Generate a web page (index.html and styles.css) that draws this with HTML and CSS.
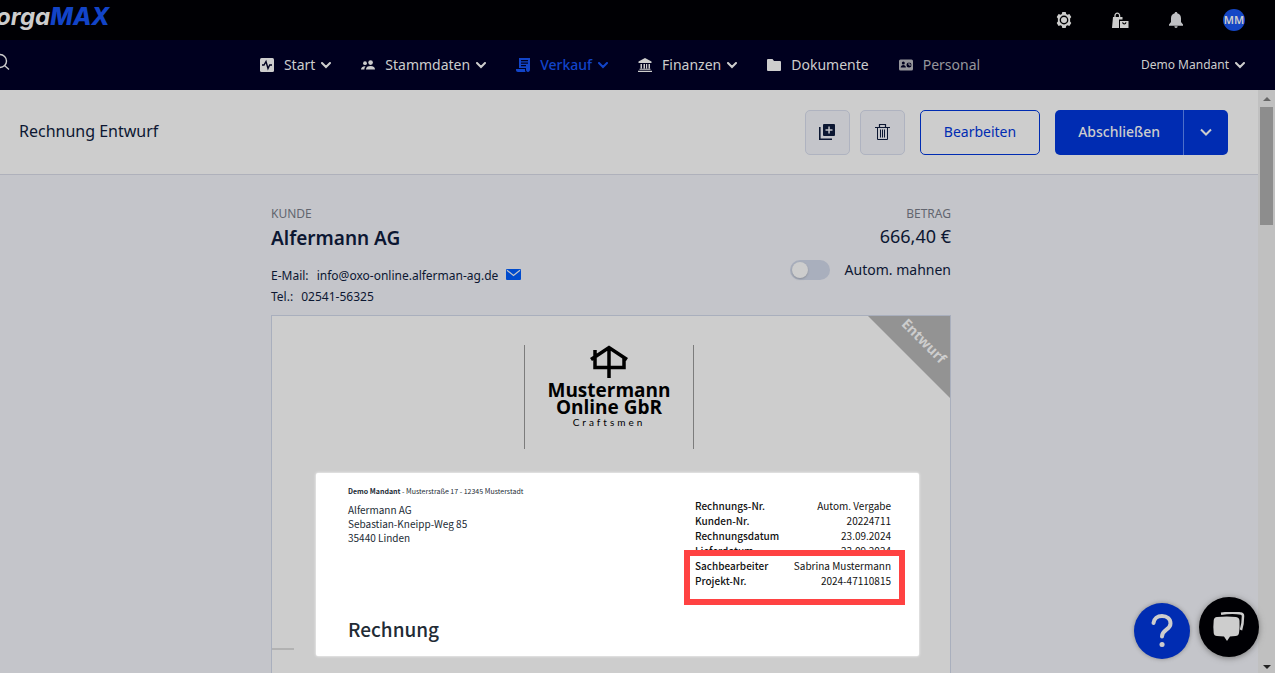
FILE: index.html
```html
<!DOCTYPE html>
<html lang="de">
<head>
<meta charset="utf-8">
<title>Rechnung Entwurf</title>
<link rel="stylesheet" href="styles.css">
</head>
<body>
<svg class="defs" aria-hidden="true">
  <symbol id="chev" viewBox="0 0 10 7"><path d="M1 1l4 4 4-4" fill="none" stroke="currentColor" stroke-width="2" stroke-linecap="round"/></symbol>
</svg>

<header class="topbar">
  <a class="brand" href="#">orga<span>MAX</span></a>
  <div class="tools">
    <button aria-label="Einstellungen"><svg width="16" height="16" viewBox="0 0 16 16"><path fill="currentColor" fill-rule="evenodd" d="M6.300 0h3.400l.5 2.100 1.100.7 2.100-.7 1.900 3-1.200 1.400v3l1.200 1.400-1.900 3-2.100-.7-1.100.7-.5 2.100H6.300l-.5-2.100-1.100-.7-2.100.7-1.900-3 1.200-1.400v-3L.7 5.100l1.900-3 2.100.7 1.100-.7zM8 3.600a4.400 4.400 0 1 0 0 8.800 4.400 4.400 0 0 0 0-8.800zM8 5a3 3 0 1 1 0 6 3 3 0 0 1 0-6z"/></svg></button>
    <button aria-label="Shop"><svg width="17" height="16" viewBox="0 0 17 16"><path d="M3 6V3.500a2.300 2.300 0 0 1 4.600 0V6" fill="none" stroke="currentColor" stroke-width="1.300"/><path fill="currentColor" d="M1 5h9.500v2.500H7V16H0z"/><path fill="currentColor" fill-rule="evenodd" d="M8 9h8.500v7H8zm2.200 1.300c.2 3 4 3 4.200 0h-1c-.2 1.500-2 1.500-2.200 0z"/></svg></button>
    <button aria-label="Benachrichtigungen" class="bell"><svg width="14" height="16" viewBox="0 0 14 16"><path fill="currentColor" d="M7 0c.8 0 1.300.5 1.300 1.200C10.700 1.800 12 3.700 12 6.300V10l2 2.500v1.200H0v-1.200L2 10V6.300C2 3.700 3.300 1.800 5.700 1.200 5.700.5 6.200 0 7 0zM5.400 14.300h3.200C8.600 15.300 8 16 7 16s-1.600-.7-1.600-1.700z"/></svg></button>
    <button class="avatar">MM</button>
  </div>
</header>

<div class="navbar">
  <div class="side"><button class="search" aria-label="Suche"><svg width="18" height="18" viewBox="0 0 18 18" fill="none" stroke="currentColor" stroke-width="1.400"><circle cx="8" cy="8" r="6.500"/><path d="M12.500 12.500l4.500 4"/></svg></button></div>
  <nav>
    <a href="#"><svg class="ic" viewBox="0 0 14 14"><rect width="14" height="14" rx="1.500" fill="currentColor"/><path d="M2 7h2l2-3.500 2 7L9.700 7H12" fill="none" stroke="#00001f" stroke-width="1.400"/></svg>Start<svg class="chev"><use href="#chev"/></svg></a>
    <a href="#"><svg class="ic" viewBox="0 0 14 14"><g fill="currentColor"><circle cx="4" cy="5.200" r="1.900"/><circle cx="9.600" cy="4.600" r="2.300"/><path d="M0 11.500c0-2 1.700-3.400 4.600-3.200-.9.800-1.200 1.800-1.200 3.200zM5 11.500c0-2.500 1.700-3.600 4.600-3.600s4.400 1.300 4.400 3.600z"/></g></svg>Stammdaten<svg class="chev"><use href="#chev"/></svg></a>
    <a href="#" class="active"><svg class="ic" viewBox="0 0 14 14"><path fill="currentColor" fill-rule="evenodd" d="M3 0h11v11.500c0 1.500-.8 2.500-2 2.500s-2-1-2-2.500V10H3zm2 2v1.300h7V2zm0 2.500v1.300h7V4.500zM5 7v1.300h5V7zM0 11h9v1c0 .8.200 1.500.6 2H2c-1.200 0-2-1-2-2z"/></svg>Verkauf<svg class="chev"><use href="#chev"/></svg></a>
    <a href="#"><svg class="ic" viewBox="0 0 14 14"><path fill="currentColor" d="M7 0l6.500 3.600V5H.5V3.600zM2.500 6H4v4.500H2.500zm3 0H7v4.500H5.500zM8 6h1.200v4.500H8zm2.500 0H12v4.500h-1.500zM1.500 10.700h11v1h-11zM0 12.700h14V14H0z"/></svg>Finanzen<svg class="chev"><use href="#chev"/></svg></a>
    <a href="#"><svg class="ic" viewBox="0 0 14 14"><path fill="currentColor" d="M1 1h4.500L7 3h6q1 0 1 1v8q0 1-1 1H1q-1 0-1-1V2q0-1 1-1z"/></svg>Dokumente</a>
    <a href="#" class="muted"><svg class="ic" viewBox="0 0 14 14"><rect y="1.500" width="14" height="11" rx="1.500" fill="currentColor"/><g fill="#00001f"><circle cx="4.300" cy="5" r="1.500"/><path d="M1.700 9.500c0-3.500 5.200-3.500 5.200 0z"/><circle cx="10" cy="7" r="2.500"/></g><path d="M10 7V4.500M10 7h2.500" stroke="currentColor"/></svg>Personal</a>
  </nav>
  <div class="side right"><button class="client">Demo Mandant<svg class="chev"><use href="#chev"/></svg></button></div>
</div>

<div class="viewport">
  <main>
    <div class="toolbar">
      <h1>Rechnung Entwurf</h1>
      <button class="square" aria-label="Duplizieren"><svg width="16" height="16" viewBox="0 0 16 16"><path fill="currentColor" fill-rule="evenodd" d="M5 0h10q1 0 1 1v10q0 1-1 1H5q-1 0-1-1V1q0-1 1-1zm4.300 2.500v2.800H6.500v1.500h2.800v2.700h1.500V6.800h2.700V5.300h-2.700V2.500z"/><path d="M.8 3v12.200H13" fill="none" stroke="currentColor" stroke-width="1.600"/></svg></button>
      <button class="square" aria-label="Löschen"><svg width="15" height="16" viewBox="0 0 15 16" fill="none" stroke="currentColor"><path d="M0 3.500h15M4.500 3.500v-3h6v3" stroke-width="1.200"/><path d="M2.500 3.500v12h10v-12M5.500 5.500v8M7.500 5.500v8M9.500 5.500v8"/></svg></button>
      <button class="outline">Bearbeiten</button>
      <div class="split">
        <button>Abschließen</button>
        <button class="more" aria-label="Weitere Aktionen"><svg width="12" height="8" viewBox="0 0 12 8"><path d="M1 1.500l5 5 5-5" fill="none" stroke="currentColor" stroke-width="2"/></svg></button>
      </div>
    </div>

    <div class="column">
      <section class="summary">
        <div>
          <div class="caption">KUNDE</div>
          <h2>Alfermann AG</h2>
          <p>E-Mail: <span>info@oxo-online.alferman-ag.de</span><a href="#" aria-label="E-Mail senden"><svg width="15" height="11" viewBox="0 0 15 11"><rect width="15" height="11" rx="1" fill="#004bcd"/><path d="M1 1.300l6.500 5.200L14 1.300" fill="none" stroke="#c4c5ca" stroke-width="1.200"/></svg></a></p>
          <p>Tel.: <span>02541-56325</span></p>
        </div>
        <div class="amount">
          <div class="caption">BETRAG</div>
          <div class="sum">666,40 €</div>
          <label class="remind"><input type="checkbox">Autom. mahnen</label>
        </div>
      </section>

      <article class="paper">
        <div class="ribbon"><span>Entwurf</span></div>
        <div class="logo">
          <svg width="38" height="33" viewBox="0 0 38 33" fill="none" stroke="#000" stroke-width="3.500"><path d="M1 14.500L19 2.500l18 12M5 13V5M5 12v10.500h29V12M19 2v31"/></svg>
          <strong>Mustermann<br>Online GbR</strong>
          <small>Craftsmen</small>
        </div>
        <div class="spot">
          <div class="address">
            <div class="sender"><b>Demo Mandant</b> - Musterstraße 17 - 12345 Musterstadt</div>
            <address>Alfermann AG<br>Sebastian-Kneipp-Weg 85<br>35440 Linden</address>
            <h3>Rechnung</h3>
          </div>
          <div class="meta">
            <table>
              <tbody>
              <tr><th>Rechnungs-Nr.</th><td>Autom. Vergabe</td></tr>
              <tr><th>Kunden-Nr.</th><td>20224711</td></tr>
              <tr><th>Rechnungsdatum</th><td>23.09.2024</td></tr>
              <tr><th>Lieferdatum</th><td>23.09.2024</td></tr>
              <tr><th>Sachbearbeiter</th><td>Sabrina Mustermann</td></tr>
              <tr><th>Projekt-Nr.</th><td>2024-47110815</td></tr>
              </tbody>
            </table>
            <div class="frame"></div>
          </div>
        </div>
        <div class="fold"></div>
      </article>
    </div>
  </main>
  <div class="scroll"><i class="up"></i><i class="thumb"></i><i class="down"></i></div>
</div>

<div class="floating">
  <button class="help" aria-label="Hilfe"><svg width="22" height="34" viewBox="0 0 22 34" fill="none" stroke="currentColor" stroke-width="4" stroke-linecap="round"><path d="M2.500 9C3 4.500 6.500 2 11 2c5 0 8.500 3 8.500 7.500 0 6.500-8.500 6-8.500 13"/><path d="M11 30.500h.1" stroke-width="5"/></svg></button>
  <button class="chat" aria-label="Chat"><svg width="32" height="30" viewBox="0 0 32 30"><path d="M8 1.800Q19 0 28 1.500q2 .3 2 2.500 0 8-2 14" fill="none" stroke="currentColor" stroke-width="2.500"/><path fill="currentColor" d="M4 5Q14 4 23 5q3.500.4 3.500 4 .4 7-.5 12-.4 2.800-3.500 3L17 24.500 14 29l-3-4.500L4 24q-3-.2-3.300-3Q0 15 .7 8.500 1 5.300 4 5z"/></svg></button>
</div>
</body>
</html>
```
FILE: styles.css
```css
* { box-sizing: border-box; }
body {
  margin: 0;
  height: 100vh;
  display: flex;
  flex-direction: column;
  overflow: hidden;
  background: #c4c5ca;
  color: #0c1732;
  font: 14px/20px "Noto Sans", sans-serif;
}
button { font: inherit; color: inherit; background: none; border: 0; padding: 0; display: flex; align-items: center; justify-content: center; }
a { color: inherit; text-decoration: none; }
h1, h2, h3, p { margin: 0; font-weight: 400; }
svg { flex: none; }
.defs { position: absolute; width: 0; height: 0; }

.topbar { flex: none; height: 40px; background: #000004; color: #cdcdcd; display: flex; justify-content: space-between; padding-right: 30px; }
.brand { font: italic 700 24px/34px Inter, sans-serif; margin-left: -4px; }
.brand span { color: #1244c8; font-weight: 800; }
.tools { display: flex; align-items: center; gap: 40px; }
.bell { color: #bfc0c4; }
.avatar { width: 22px; height: 22px; border-radius: 50%; background: #1546c5; font-size: 11px; font-weight: 600; }

.navbar { flex: none; height: 50px; background: #00001f; color: #cdcdcd; display: flex; align-items: center; padding-right: 30px; }
.side { flex: 1; display: flex; }
.right { justify-content: flex-end; }
.search { margin: 0 0 6px -8px; }
nav { display: flex; gap: 30px; padding-right: 5px; }
nav a { display: flex; align-items: center; }
.ic { width: 14px; height: 14px; margin-right: 10px; }
.chev { width: 10px; height: 7px; margin-left: 6px; }
.active { color: #1244c8; font-weight: 500; }
.muted { color: #96969c; }
.client { font-size: 12px; }

.viewport { flex: 1; min-height: 0; display: flex; }
main { flex: 1; overflow: hidden; }
.toolbar { height: 85px; background: #cdcdcd; border-bottom: 1px solid #afb1bb; display: flex; align-items: center; padding: 0 30px 0 19px; }
h1 { flex: 1; font-size: 16px; padding-bottom: 2px; }
.square { width: 45px; height: 45px; margin-right: 10px; border: 1px solid #afb3c0; border-radius: 5px; background: #c4c5ca; }
.square + .square { margin: 0 15px 0 0; }
.outline { height: 45px; padding: 0 23px; border: 1px solid #002cb2; border-radius: 5px; color: #002cb2; margin-right: 15px; }
.split { display: flex; height: 45px; background: #002cb2; color: #cdcdcd; border-radius: 5px; font-weight: 500; }
.split button { padding: 0 23px; }
.split .more { width: 45px; padding: 0; border-left: 1px solid #4d6fc9; }

.column { width: 680px; margin: 0 auto; padding-top: 29px; position: relative; right: 18px; }
.summary { display: flex; justify-content: space-between; height: 111px; }
.caption { font-size: 12px; line-height: 20px; color: #62656f; }
h2 { font-size: 19px; line-height: 28px; font-weight: 600; margin-bottom: 13px; }
.summary p { font-size: 12px; line-height: 21px; }
.summary p span { margin: 0 8px 0 5px; }
.amount { text-align: right; }
.sum { font-size: 18px; line-height: 24px; }
.remind { display: flex; align-items: center; justify-content: flex-end; gap: 15px; margin-top: 12px; }
.remind input { appearance: none; width: 40px; height: 20px; margin: 0; padding: 2px; border-radius: 10px; background: #a9afbd; }
.remind input::before { content: ""; display: block; width: 16px; height: 16px; border-radius: 50%; background: #cdcdcd; box-shadow: 0 1px 2px #8b8f99; }

.paper { position: relative; overflow: hidden; min-height: 400px; padding: 29px 31px 0 44px; background: #cdcdcd; border: 1px solid #a9afbd; }
.ribbon { position: absolute; top: 0; right: 0; width: 82px; height: 82px; background: #939393; clip-path: polygon(0 0, 100% 0, 100% 100%); }
.ribbon span { position: absolute; top: 15px; left: 26px; width: 60px; text-align: center; transform: rotate(45deg); color: #cdcdcd; font-weight: 700; font-size: 14px; line-height: 20px; }
.logo { width: 170px; height: 104px; margin-left: 208px; border: solid #7c7c7c; border-width: 0 1px; display: flex; flex-direction: column; align-items: center; color: #000; }
.logo strong { font: 700 19px/17px "Open Sans", sans-serif; text-align: center; margin-top: 4px; }
.logo small { font: 10px/12px Lato, sans-serif; letter-spacing: 3px; }
.spot { display: flex; justify-content: space-between; height: 183px; margin-top: 24px; padding: 0 28px 0 32px; background: #fff; box-shadow: 0 0 3px #fff; border-radius: 2px; color: #222b35; font: 10px/15px "Noto Sans CJK SC", sans-serif; }
.sender { font-size: 7px; line-height: 15px; margin-top: 11px; }
address { font-style: normal; line-height: 14px; margin-top: 4px; }
h3 { font-size: 19px; line-height: 30px; font-weight: 500; margin-top: 69px; }
.meta { position: relative; align-self: flex-start; width: 196px; margin-top: 25px; color: #111; }
table { width: 100%; border-collapse: collapse; }
th, td { padding: 0; height: 15px; text-align: left; font-weight: 500; }
td { text-align: right; font-weight: 400; }
.frame { position: absolute; left: -11px; right: -14px; top: 52px; height: 55px; border: 6px solid #ff4242; }
.fold { position: absolute; left: 0; top: 332px; width: 22px; height: 2px; background: #b2b2b2; }

.scroll { width: 17px; background: #c0c0c0; display: flex; flex-direction: column; align-items: center; }
.up, .down { border: 4px solid transparent; }
.up { margin: 3px 0 6px; border-bottom-color: #666; }
.thumb { width: 13px; height: 118px; background: #8d8d8d; }
.down { margin-top: auto; border-top-color: #222; }

.floating { position: fixed; right: 16px; bottom: 14px; display: flex; align-items: center; gap: 9px; color: #cdcdcd; }
.help { width: 56px; height: 56px; border-radius: 50%; background: #002cb2; box-shadow: 0 0 4px #888; margin-top: 8px; }
.chat { width: 60px; height: 60px; border-radius: 50%; background: #000004; box-shadow: 0 1px 6px #777; }
```
